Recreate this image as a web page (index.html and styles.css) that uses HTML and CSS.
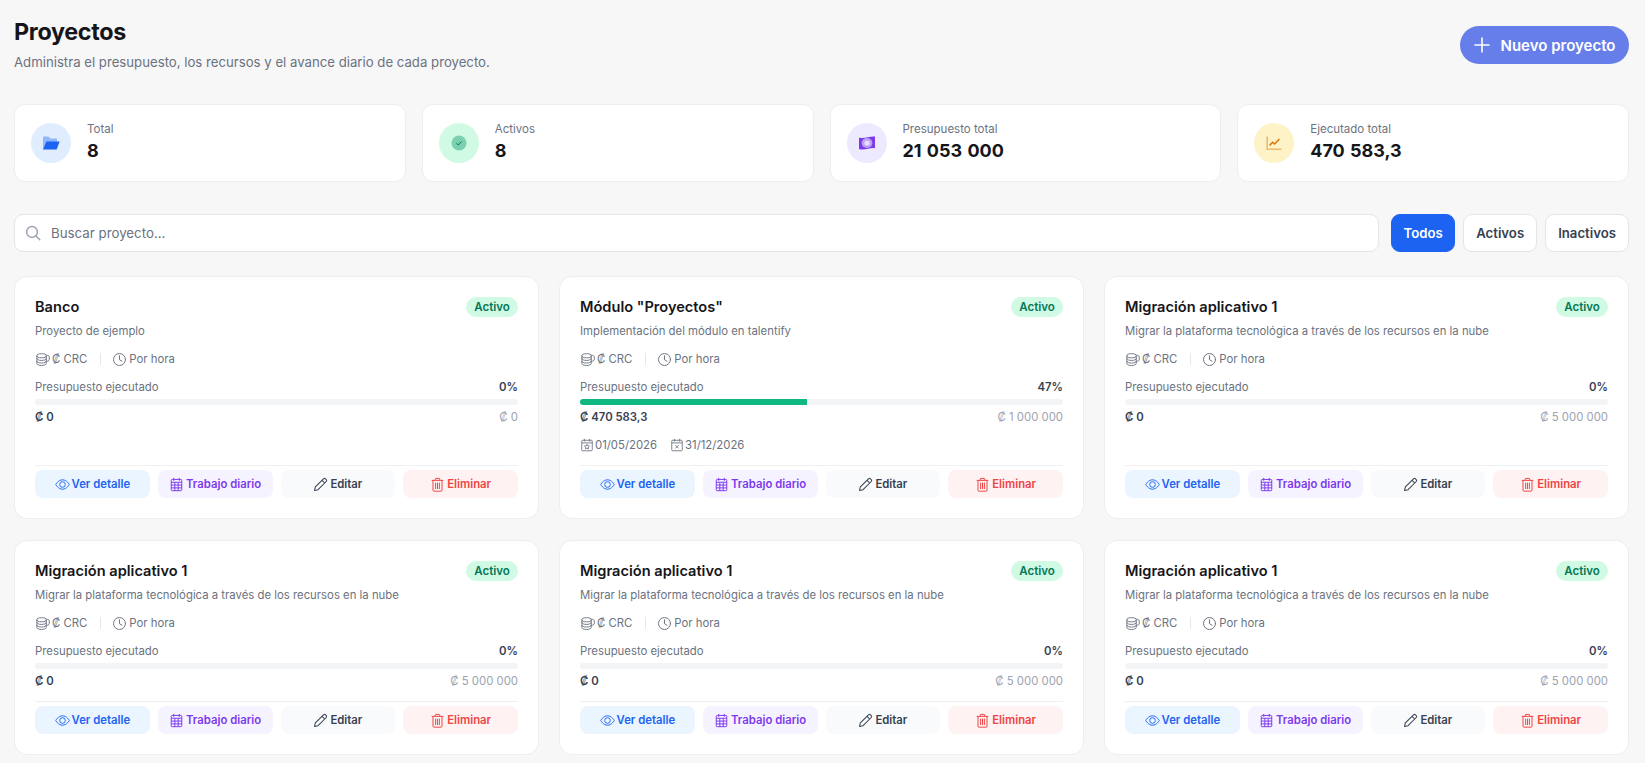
FILE: index.html
```html
<!DOCTYPE html>
<html lang="es">
<head>
<meta charset="utf-8">
<title>Proyectos</title>
<link rel="stylesheet" href="styles.css">
</head>
<body>
<svg class="sprite" aria-hidden="true">
  <symbol id="i-coins" viewBox="0 0 16 16" fill="none" stroke="currentColor" stroke-width="1"><ellipse cx="7" cy="4" rx="5" ry="2.2"/><path d="M2 4v8.2c0 1.2 2.2 2.2 5 2.2s5-1 5-2.2V4M2 6.8c0 1.2 2.2 2.2 5 2.2s5-1 5-2.2M2 9.6c0 1.2 2.2 2.2 5 2.2s5-1 5-2.2M12 3.4c1.8.1 3.2.7 3.2 1.6v3.4c0 .8-1.4 1.4-3.2 1.6"/></symbol>
  <symbol id="i-clock" viewBox="0 0 16 16" fill="none" stroke="currentColor" stroke-width="1.05" stroke-linecap="round"><circle cx="8" cy="8" r="6.4"/><path d="M8 4v4.2l2.6 1.6"/></symbol>
  <symbol id="i-eye" viewBox="0 0 16 16" fill="none" stroke="currentColor" stroke-width="1"><path d="M.8 8s2.6-5 7.2-5 7.2 5 7.2 5-2.6 5-7.2 5S.8 8 .8 8z"/><circle cx="8" cy="8" r="3"/></symbol>
  <symbol id="i-cal" viewBox="0 0 16 16" fill="none" stroke="currentColor" stroke-width="1.05"><rect x="2.4" y="2.6" width="11.2" height="12" rx="1"/><path d="M5 1v3M11 1v3M2.4 5.6h11.2M2.4 8.6h11.2M2.4 11.6h11.2M6.2 5.6v9M9.8 5.6v9"/></symbol>
  <symbol id="i-pencil" viewBox="0 0 16 16" fill="none" stroke="currentColor" stroke-width="1.1" stroke-linejoin="round"><path d="M11.2 1.9a1.5 1.5 0 0 1 2.1 0l.8.8a1.5 1.5 0 0 1 0 2.1L5.4 13.5 1.6 14.4l.9-3.8z"/><path d="M9.6 3.5l2.9 2.9"/></symbol>
  <symbol id="i-trash" viewBox="0 0 16 16" fill="none" stroke="currentColor" stroke-width="1.05"><path d="M1.8 3.6h12.4M5.6 3.6V2.2c0-.4.3-.7.7-.7h3.4c.4 0 .7.3.7.7v1.4M3.2 3.6v10.6c0 .5.4.9.9.9h7.8c.5 0 .9-.4.9-.9V3.6M6 6v6.8M8 6v6.8M10 6v6.8"/></symbol>
  <symbol id="i-calstar" viewBox="0 0 16 16" fill="none" stroke="currentColor" stroke-width="1"><rect x="2" y="2.6" width="12" height="12" rx="1"/><path d="M5 1v3M11 1v3M2 5.6h12M8 7.2l.9 1.7 1.9.3-1.4 1.3.4 1.9L8 11.5l-1.8.9.4-1.9-1.4-1.3 1.9-.3z"/></symbol>
  <symbol id="i-calx" viewBox="0 0 16 16" fill="none" stroke="currentColor" stroke-width="1"><rect x="2" y="2.6" width="12" height="12" rx="1"/><path d="M5 1v3M11 1v3M2 5.6h12M6.2 8.2l3.6 3.6M9.8 8.2l-3.6 3.6"/></symbol>
</svg>

<main class="page">
  <header class="head">
    <div>
      <h1 class="title">Proyectos</h1>
      <p class="subtitle">Administra el presupuesto, los recursos y el avance diario de cada proyecto.</p>
    </div>
    <button class="new-btn">
      <svg class="new-plus" viewBox="0 0 16 16" fill="none" stroke="currentColor" stroke-width="1.6" stroke-linecap="round"><path d="M8 1v14M1 8h14"/></svg>
      Nuevo proyecto
    </button>
  </header>

  <section class="stats">
    <article class="stat">
      <span class="stat-ic ic-blue">
        <svg viewBox="0 0 18 14" width="18" height="14"><path d="M1 13V1.6C1 1 1.4.6 2 .6h4.4l2 2H14c.6 0 1 .4 1 1V6H5z" fill="#1d63f2" opacity=".4"/><path d="M4.4 5.4H17.6L14.6 13.4H1z" fill="#1d63f2"/></svg>
      </span>
      <div class="stat-text"><div class="stat-label">Total</div><div class="stat-value">8</div></div>
    </article>
    <article class="stat">
      <span class="stat-ic ic-green">
        <svg viewBox="0 0 16 16" width="16" height="16"><circle cx="8" cy="8" r="7.5" fill="#059669" opacity=".42"/><path d="M5.4 8.2l1.9 1.8 3.3-3.5" fill="none" stroke="#047857" stroke-width="1"/></svg>
      </span>
      <div class="stat-text"><div class="stat-label">Activos</div><div class="stat-value">8</div></div>
    </article>
    <article class="stat">
      <span class="stat-ic ic-purple">
        <svg viewBox="0 0 18 14" width="18" height="14"><path d="M1 1.4c5 1.8 11-1.6 16-.8v11.6c-5-.8-11 2.6-16 .8z" fill="#7c3aed"/><ellipse cx="9" cy="7" rx="5.4" ry="5" fill="#b9a1f5"/><circle cx="9" cy="7" r="2.6" fill="#e6dcfd"/></svg>
      </span>
      <div class="stat-text"><div class="stat-label">Presupuesto total</div><div class="stat-value">21 053 000</div></div>
    </article>
    <article class="stat">
      <span class="stat-ic ic-amber">
        <svg viewBox="0 0 16 15" width="16" height="15" fill="none"><path d="M1.2 .6v12.6h14.4" stroke="#d97706" stroke-width="1.6" opacity=".45"/><path d="M3.6 9.6l3-3.4 2 1.8 4.8-5" stroke="#d97706" stroke-width="1.5"/></svg>
      </span>
      <div class="stat-text"><div class="stat-label">Ejecutado total</div><div class="stat-value">470 583,3</div></div>
    </article>
  </section>

  <section class="toolbar">
    <label class="search">
      <svg class="search-ic" viewBox="0 0 16 16" fill="none" stroke="#9ca3af" stroke-width="1.5" stroke-linecap="round"><circle cx="7" cy="7" r="5.4"/><path d="M11 11l3.8 3.8"/></svg>
      <span>Buscar proyecto...</span>
    </label>
    <div class="filters">
      <button class="filter is-on">Todos</button>
      <button class="filter">Activos</button>
      <button class="filter">Inactivos</button>
    </div>
  </section>

  <section class="grid">
    <article class="card">
      <div class="card-top"><h2 class="card-name">Banco</h2><span class="badge">Activo</span></div>
      <p class="card-desc">Proyecto de ejemplo</p>
      <div class="meta"><svg class="ic"><use href="#i-coins"/></svg><span>₡ CRC</span><i class="sep"></i><svg class="ic"><use href="#i-clock"/></svg><span>Por hora</span></div>
      <div class="budget"><span>Presupuesto ejecutado</span><b>0%</b></div>
      <div class="track"><div class="fill" style="width:0%"></div></div>
      <div class="amounts"><b>₡ 0</b><span>₡ 0</span></div>
      <div class="actions">
        <button class="act act-blue"><svg class="ic"><use href="#i-eye"/></svg>Ver detalle</button>
        <button class="act act-purple"><svg class="ic"><use href="#i-cal"/></svg>Trabajo diario</button>
        <button class="act act-gray"><svg class="ic"><use href="#i-pencil"/></svg>Editar</button>
        <button class="act act-red"><svg class="ic"><use href="#i-trash"/></svg>Eliminar</button>
      </div>
    </article>
    <article class="card">
      <div class="card-top"><h2 class="card-name">Módulo "Proyectos"</h2><span class="badge">Activo</span></div>
      <p class="card-desc">Implementación del módulo en talentify</p>
      <div class="meta"><svg class="ic"><use href="#i-coins"/></svg><span>₡ CRC</span><i class="sep"></i><svg class="ic"><use href="#i-clock"/></svg><span>Por hora</span></div>
      <div class="budget"><span>Presupuesto ejecutado</span><b>47%</b></div>
      <div class="track"><div class="fill" style="width:47%"></div></div>
      <div class="amounts"><b>₡ 470 583,3</b><span>₡ 1 000 000</span></div>
      <div class="dates"><span class="date"><svg class="ic ic-date"><use href="#i-calstar"/></svg>01/05/2026</span><span class="date"><svg class="ic ic-date"><use href="#i-calx"/></svg>31/12/2026</span></div>
      <div class="actions">
        <button class="act act-blue"><svg class="ic"><use href="#i-eye"/></svg>Ver detalle</button>
        <button class="act act-purple"><svg class="ic"><use href="#i-cal"/></svg>Trabajo diario</button>
        <button class="act act-gray"><svg class="ic"><use href="#i-pencil"/></svg>Editar</button>
        <button class="act act-red"><svg class="ic"><use href="#i-trash"/></svg>Eliminar</button>
      </div>
    </article>
    <article class="card">
      <div class="card-top"><h2 class="card-name">Migración aplicativo 1</h2><span class="badge">Activo</span></div>
      <p class="card-desc">Migrar la plataforma tecnológica a través de los recursos en la nube</p>
      <div class="meta"><svg class="ic"><use href="#i-coins"/></svg><span>₡ CRC</span><i class="sep"></i><svg class="ic"><use href="#i-clock"/></svg><span>Por hora</span></div>
      <div class="budget"><span>Presupuesto ejecutado</span><b>0%</b></div>
      <div class="track"><div class="fill" style="width:0%"></div></div>
      <div class="amounts"><b>₡ 0</b><span>₡ 5 000 000</span></div>
      <div class="actions">
        <button class="act act-blue"><svg class="ic"><use href="#i-eye"/></svg>Ver detalle</button>
        <button class="act act-purple"><svg class="ic"><use href="#i-cal"/></svg>Trabajo diario</button>
        <button class="act act-gray"><svg class="ic"><use href="#i-pencil"/></svg>Editar</button>
        <button class="act act-red"><svg class="ic"><use href="#i-trash"/></svg>Eliminar</button>
      </div>
    </article>
    <article class="card">
      <div class="card-top"><h2 class="card-name">Migración aplicativo 1</h2><span class="badge">Activo</span></div>
      <p class="card-desc">Migrar la plataforma tecnológica a través de los recursos en la nube</p>
      <div class="meta"><svg class="ic"><use href="#i-coins"/></svg><span>₡ CRC</span><i class="sep"></i><svg class="ic"><use href="#i-clock"/></svg><span>Por hora</span></div>
      <div class="budget"><span>Presupuesto ejecutado</span><b>0%</b></div>
      <div class="track"><div class="fill" style="width:0%"></div></div>
      <div class="amounts"><b>₡ 0</b><span>₡ 5 000 000</span></div>
      <div class="actions">
        <button class="act act-blue"><svg class="ic"><use href="#i-eye"/></svg>Ver detalle</button>
        <button class="act act-purple"><svg class="ic"><use href="#i-cal"/></svg>Trabajo diario</button>
        <button class="act act-gray"><svg class="ic"><use href="#i-pencil"/></svg>Editar</button>
        <button class="act act-red"><svg class="ic"><use href="#i-trash"/></svg>Eliminar</button>
      </div>
    </article>
    <article class="card">
      <div class="card-top"><h2 class="card-name">Migración aplicativo 1</h2><span class="badge">Activo</span></div>
      <p class="card-desc">Migrar la plataforma tecnológica a través de los recursos en la nube</p>
      <div class="meta"><svg class="ic"><use href="#i-coins"/></svg><span>₡ CRC</span><i class="sep"></i><svg class="ic"><use href="#i-clock"/></svg><span>Por hora</span></div>
      <div class="budget"><span>Presupuesto ejecutado</span><b>0%</b></div>
      <div class="track"><div class="fill" style="width:0%"></div></div>
      <div class="amounts"><b>₡ 0</b><span>₡ 5 000 000</span></div>
      <div class="actions">
        <button class="act act-blue"><svg class="ic"><use href="#i-eye"/></svg>Ver detalle</button>
        <button class="act act-purple"><svg class="ic"><use href="#i-cal"/></svg>Trabajo diario</button>
        <button class="act act-gray"><svg class="ic"><use href="#i-pencil"/></svg>Editar</button>
        <button class="act act-red"><svg class="ic"><use href="#i-trash"/></svg>Eliminar</button>
      </div>
    </article>
    <article class="card">
      <div class="card-top"><h2 class="card-name">Migración aplicativo 1</h2><span class="badge">Activo</span></div>
      <p class="card-desc">Migrar la plataforma tecnológica a través de los recursos en la nube</p>
      <div class="meta"><svg class="ic"><use href="#i-coins"/></svg><span>₡ CRC</span><i class="sep"></i><svg class="ic"><use href="#i-clock"/></svg><span>Por hora</span></div>
      <div class="budget"><span>Presupuesto ejecutado</span><b>0%</b></div>
      <div class="track"><div class="fill" style="width:0%"></div></div>
      <div class="amounts"><b>₡ 0</b><span>₡ 5 000 000</span></div>
      <div class="actions">
        <button class="act act-blue"><svg class="ic"><use href="#i-eye"/></svg>Ver detalle</button>
        <button class="act act-purple"><svg class="ic"><use href="#i-cal"/></svg>Trabajo diario</button>
        <button class="act act-gray"><svg class="ic"><use href="#i-pencil"/></svg>Editar</button>
        <button class="act act-red"><svg class="ic"><use href="#i-trash"/></svg>Eliminar</button>
      </div>
    </article>
  </section>
</main>
</body>
</html>
```

FILE: styles.css
```css
* { box-sizing: border-box; }
html, body { margin: 0; height: 100%; overflow: hidden; }
body {
  background: #f7f7f7;
  color: #18181b;
  font-family: Inter, "Liberation Sans", sans-serif;
}
.sprite { position: absolute; width: 0; height: 0; }
.page { padding: 20px 16px 0 14px; }
button { font-family: inherit; cursor: pointer; border: 0; }

.head { display: flex; justify-content: space-between; align-items: flex-start; height: 84px; }
.title { margin: 0; font-size: 23.3px; line-height: 24px; font-weight: 700; letter-spacing: -.3px; color: #16161a; }
.subtitle { margin: 10px 0 0; font-size: 13.2px; line-height: 16px; color: #6b7280; }
.new-btn {
  margin-top: 6px; height: 38px; width: 169px; border-radius: 19px;
  background: #667eea; color: #fff; font-size: 15px; font-weight: 600;
  display: flex; align-items: center; justify-content: center; gap: 11px; padding: 0;
}
.new-plus { width: 16px; height: 16px; }

.stats { display: grid; grid-template-columns: repeat(4, 1fr); gap: 16px; }
.stat {
  height: 78px; background: #fff; border: 1px solid #eeeeee; border-radius: 11px;
  display: flex; align-items: center; gap: 16px; padding: 0 16px;
}
.stat-ic { width: 40px; height: 40px; border-radius: 50%; display: flex; align-items: center; justify-content: center; flex: none; }
.ic-blue { background: #e0edff; }
.ic-green { background: #d1fae5; }
.ic-purple { background: #ede9fe; }
.ic-amber { background: #fef3c7; }
.stat-text { padding-bottom: 3px; }
.stat-label { font-size: 11.5px; line-height: 16px; color: #6b7280; }
.stat-value { font-size: 18px; line-height: 24px; font-weight: 700; word-spacing: 1px; margin-top: 2px; color: #16161a; }

.toolbar { display: flex; gap: 12px; margin-top: 32px; }
.search {
  flex: 1; height: 38px; background: #fff; border: 1px solid #e5e5e5; border-radius: 9px;
  display: flex; align-items: center; gap: 10px; padding: 0 10px; font-size: 13.3px; color: #6b7280;
}
.search-ic { width: 16px; height: 16px; }
.filters { display: flex; gap: 8px; }
.filter {
  height: 38px; padding: 0 12px; border-radius: 9px; background: #fff; border: 1px solid #e5e5e5;
  font-size: 13.2px; font-weight: 600; color: #374151;
}
.filter.is-on { background: #1d63f2; border-color: #1d63f2; color: #fff; width: 64px; padding: 0; }

.grid { display: grid; grid-template-columns: repeat(3, 1fr); gap: 21px 20px; margin-top: 24px; }
.card {
  background: #fff; border: 1px solid #eeeeee; border-radius: 13px; padding: 20px;
  display: flex; flex-direction: column;
}
.card-top { display: flex; justify-content: space-between; align-items: center; height: 20px; }
.card-name { margin: 0; font-size: 14.6px; font-weight: 600; color: #16161a; }
.badge {
  height: 20px; width: 52px; border-radius: 10px; background: #d1fae5; color: #047857;
  font-size: 11.5px; font-weight: 600; display: flex; align-items: center; justify-content: center;
}
.card-desc { margin: 6px 0 0; font-size: 11.35px; line-height: 16px; color: #6b7280; }
.meta { display: flex; align-items: center; margin-top: 12px; height: 16px; font-size: 11.35px; color: #6b7280; }
.ic { width: 15px; height: 15px; flex: none; }
.ic-date { width: 14px; height: 14px; }
.meta span { margin-left: 2px; }
.sep { width: 1px; height: 12px; background: #e5e7eb; margin: 0 11px 0 13px; }
.budget { display: flex; justify-content: space-between; margin-top: 12px; font-size: 11.35px; line-height: 16px; color: #6b7280; }
.budget b { font-weight: 600; color: #374151; }
.track { height: 6px; border-radius: 3px; background: #f3f4f6; margin-top: 4px; overflow: hidden; }
.fill { height: 100%; background: #10b981; }
.amounts { display: flex; justify-content: space-between; margin: 4px 0 12px; font-size: 11.35px; line-height: 16px; color: #9ca3af; }
.amounts b { font-weight: 600; color: #374151; }
.dates { display: flex; gap: 13px; margin-bottom: 12px; height: 16px; font-size: 11.35px; color: #6b7280; }
.date { display: flex; align-items: center; gap: 1px; }
.actions {
  margin-top: auto; border-top: 1px solid #f0f0f0; padding-top: 4px;
  display: grid; grid-template-columns: repeat(4, 1fr); gap: 8px;
}
.act {
  height: 28px; border-radius: 8px; font-size: 11.35px; font-weight: 600; padding: 0;
  display: flex; align-items: center; justify-content: center; gap: 2px;
}
.act-blue { background: #ebf5ff; color: #1d63f2; }
.act-purple { background: #f5f3ff; color: #7c3aed; }
.act-gray { background: #f8fafc; color: #374151; }
.act-red { background: #fef2f2; color: #ef4444; }
```
